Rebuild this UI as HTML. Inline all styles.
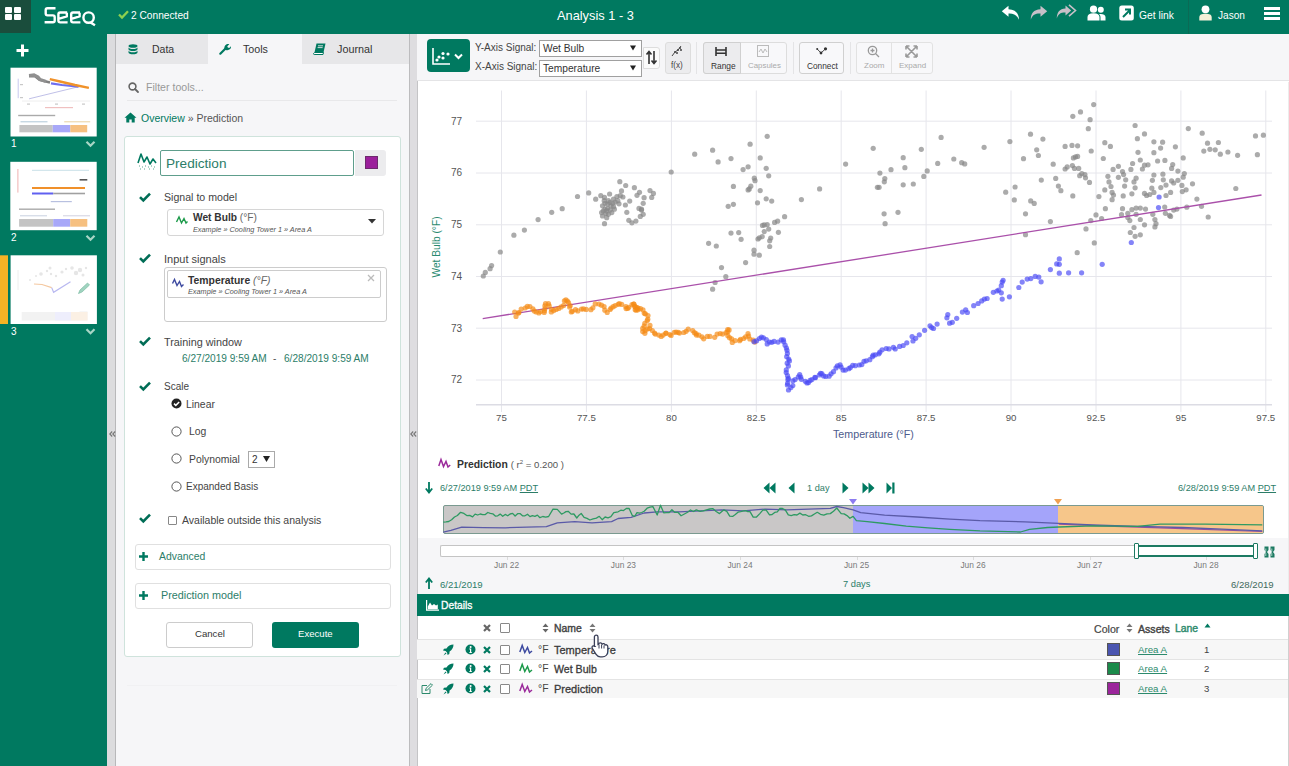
<!DOCTYPE html>
<html><head><meta charset="utf-8">
<style>
*{margin:0;padding:0;box-sizing:border-box}
html,body{width:1289px;height:766px;overflow:hidden;background:#fff;font-family:"Liberation Sans",sans-serif;color:#333}
.a{position:absolute}
.t{position:absolute;white-space:nowrap;line-height:1}
.teal{color:#007960}
svg{position:absolute;overflow:visible}
</style></head><body>
<!-- HEADER -->
<div class="a" style="left:0;top:0;width:1289px;height:34px;background:#007960"></div>
<div class="a" style="left:0;top:0;width:31px;height:33px;background:#1a4d3c"></div>
<div class="a" style="left:5px;top:7px;width:7px;height:6px;background:#fff;border-radius:1px"></div>
<div class="a" style="left:14px;top:7px;width:7px;height:6px;background:#fff;border-radius:1px"></div>
<div class="a" style="left:5px;top:14px;width:7px;height:6px;background:#fff;border-radius:1px"></div>
<div class="a" style="left:14px;top:14px;width:7px;height:6px;background:#fff;border-radius:1px"></div>
<svg style="left:0;top:0" width="100" height="30" viewBox="0 0 100 30"><g stroke="#fff" stroke-width="2.4" fill="none" stroke-linejoin="round">
<path d="M55.5 8.3 H47.5 Q45.7 8.3 45.7 10.1 V13.6 Q45.7 15.4 47.5 15.4 H52.9 Q54.7 15.4 54.7 17.2 V20.4 Q54.7 22.2 52.9 22.2 H44.6"/>
<path d="M67.2 12.5 H60.2 Q58.4 12.5 58.4 14.3 V20.6 Q58.4 22.4 60.2 22.4 H67.6 M58.6 18.8 L66.8 16.4 V12.8"/>
<path d="M80 12.5 H73 Q71.2 12.5 71.2 14.3 V20.6 Q71.2 22.4 73 22.4 H80.4 M71.4 18.8 L79.6 16.4 V12.8"/>
<circle cx="88.6" cy="17.6" r="5.2"/><path d="M90.5 22.5 L95 25.3"/>
</g></svg>
<svg style="left:118px;top:10px" width="11" height="9" viewBox="0 0 11 9"><path d="M1 4.5L4 7.5L10 1.2" stroke="#8fd14f" stroke-width="2.3" fill="none"/></svg><div class="t" style="left:131px;top:11px;font-size:10.2px;color:#fff">2 Connected</div>
<div class="t" style="left:557px;top:10px;font-size:12.8px;color:#fff">Analysis 1 - 3</div>

<svg style="left:1001px;top:5px" width="20" height="16" viewBox="0 0 20 16"><path d="M7.5 0.8 L0.8 6.3 L7.5 11.8 V8.5 C12 8.3 15.5 9.2 18 14.8 C18 8.5 14.5 4.5 7.5 4.2z" fill="#fff"/></svg>
<svg style="left:1030px;top:5px" width="18" height="16" viewBox="0 0 18 16"><path d="M10.5 0.8 L17.2 6.3 L10.5 11.8 V8.5 C6 8.3 2.5 9.2 0.8 14.8 C0.8 8.5 3.5 4.5 10.5 4.2z" fill="#c8c0c8"/></svg>
<svg style="left:1056px;top:4px" width="20" height="17" viewBox="0 0 20 17"><path d="M9.5 1.5 L15.2 6.5 L9.5 11.5 V8.5 C5.5 8.3 2.5 9.2 0.8 14.5 C0.8 8.5 3.5 4.8 9.5 4.5z" fill="#c8c0c8"/><path d="M13 0.8 L19.5 6.5 L13 12.2" stroke="#c8c0c8" stroke-width="1.6" fill="none"/></svg>
<svg style="left:1087px;top:5px" width="19" height="16" viewBox="0 0 19 16"><circle cx="6.5" cy="4.2" r="3.6" fill="#fff"/><path d="M0.5 15.5 V12 C0.5 9.5 2.5 8.2 6.5 8.2 C10.5 8.2 12.5 9.5 12.5 12 V15.5z" fill="#fff"/><circle cx="13.8" cy="4.8" r="3" fill="#fff"/><path d="M13.5 15.5 V12.5 C13.5 11 13 10 12 9 C15.5 8.5 18.5 9.5 18.5 12 V15.5z" fill="#fff"/></svg>
<svg style="left:1119px;top:5px" width="15" height="16" viewBox="0 0 15 16"><rect x="0.3" y="0.5" width="14.5" height="15" rx="2.5" fill="#fff"/><path d="M4 12 L10.5 5.5 M6 4.5 H11 V9.5" stroke="#007960" stroke-width="2" fill="none"/></svg>
<svg style="left:1199px;top:5px" width="13" height="16" viewBox="0 0 13 16"><circle cx="6.5" cy="4.3" r="3.9" fill="#fff"/><path d="M0.3 15.5 V12.5 C0.3 9.8 2.5 8.8 6.5 8.8 C10.5 8.8 12.7 9.8 12.7 12.5 V15.5z" fill="#f4f0d8"/></svg>
<div class="t" style="left:1139px;top:11px;font-size:10.3px;color:#fff">Get link</div>
<div class="a" style="left:1188px;top:0;width:1px;height:34px;background:#0b6a55"></div>
<div class="t" style="left:1218px;top:11px;font-size:10.1px;color:#fff">Jason</div>
<div class="a" style="left:1264px;top:7px;width:16px;height:3px;background:#fff"></div>
<div class="a" style="left:1264px;top:12px;width:16px;height:3px;background:#fff"></div>
<div class="a" style="left:1264px;top:17px;width:16px;height:3px;background:#fff"></div>

<!-- LEFT SIDEBAR -->
<div class="a" style="left:0;top:34px;width:107px;height:732px;background:#007960"></div>
<svg style="left:16px;top:44px" width="13" height="13" viewBox="0 0 13 13"><path d="M6.5 0.5v12M0.5 6.5h12" stroke="#fff" stroke-width="3"/></svg>
<svg style="left:0;top:0;filter:blur(0.35px)" width="107" height="766" viewBox="0 0 107 766">
 <rect x="10.5" y="67.7" width="86.2" height="68.8" fill="#fff"/>
 <line x1="18.2" y1="78.7" x2="18.2" y2="98.2" stroke="#c8c8f0" stroke-width="1"/>
 <line x1="22" y1="101" x2="90" y2="101" stroke="#eee" stroke-width="1"/>
 <line x1="29.1" y1="98.8" x2="78.6" y2="86.7" stroke="#c0c0e8" stroke-width="1"/>
 <path d="M29 76.4 L35 76.2 L39.5 79.8 L50 82.5" stroke="#808080" stroke-width="2.4" fill="none"/>
 <path d="M51 83.3 L62 85 L78.6 86.7" stroke="#6e6ef0" stroke-width="2.2" fill="none"/>
 <path d="M49.8 79.2 L60 81.5 L75 85 L88.9 87.9" stroke="#f0922a" stroke-width="2.4" fill="none"/>

 <g fill="#c8c8c8"><rect x="20" y="84" width="3" height="1.2"/><rect x="20" y="97" width="3" height="1.2"/><rect x="27" y="103.5" width="3" height="1.2"/><rect x="55" y="103.5" width="3" height="1.2"/><rect x="82" y="103.5" width="3" height="1.2"/></g>
 <g fill="#c8c8c8"><rect x="26" y="172" width="3" height="1.2"/><rect x="23" y="189.5" width="2" height="1.2"/><rect x="33" y="197" width="3" height="1.2"/><rect x="56" y="197" width="3" height="1.2"/><rect x="80" y="197" width="3" height="1.2"/></g>
 <path d="M29 75.5 L34 75 L38 77 L40 79.5 L46 81.5" stroke="#909090" stroke-width="3.2" fill="none"/>
 <rect x="45" y="107" width="28" height="1.2" fill="#f0c0c0"/>
 <rect x="18.2" y="114.8" width="37" height="1.4" fill="#aaa"/>
 <rect x="20.5" y="121.3" width="27" height="1" fill="#b0c8d8"/>
 <rect x="64.2" y="121.3" width="26" height="1" fill="#e8d0a0"/>
 <rect x="19.4" y="125" width="33.3" height="7.3" fill="#c4c4c4"/>
 <rect x="52.7" y="125" width="17.6" height="7.3" fill="#a8a8f8"/>
 <rect x="70.3" y="125" width="16.9" height="7.3" fill="#f6c080"/>

 <rect x="10.3" y="161.8" width="86.4" height="68.4" fill="#fff"/>
 <line x1="32" y1="170.3" x2="89" y2="170.3" stroke="#c8e0e8" stroke-width="1"/>
 <line x1="17.9" y1="169" x2="17.9" y2="192.6" stroke="#f0b0b0" stroke-width="1"/>
 <line x1="32" y1="187.9" x2="85" y2="187.9" stroke="#f0902a" stroke-width="2"/>
 <line x1="32" y1="193.5" x2="53.2" y2="193.5" stroke="#6060f0" stroke-width="2"/>
 <line x1="53.2" y1="193.5" x2="85" y2="193.5" stroke="#a0a0a0" stroke-width="1.6"/>
 <rect x="79.6" y="179" width="7.7" height="1.6" fill="#555"/>
 <rect x="50.8" y="201" width="21" height="1.2" fill="#b8c0e0"/>
 <rect x="19" y="208.5" width="36" height="1.4" fill="#aaa"/>
 <rect x="20" y="215.3" width="27" height="1" fill="#c8d0e0"/>
 <rect x="63" y="215.3" width="27" height="1" fill="#d0d0e0"/>
 <rect x="19.1" y="219" width="34.1" height="7.7" fill="#c4c4c4"/>
 <rect x="53.2" y="219" width="17" height="7.7" fill="#a8a8f8"/>
 <rect x="70.2" y="219" width="17.1" height="7.7" fill="#f6c080"/>

 <rect x="0" y="255.3" width="8" height="68.7" fill="#f6b325"/>
 <rect x="10.6" y="255.3" width="86.3" height="68.7" fill="#fff"/>
 <line x1="18" y1="270" x2="18" y2="290" stroke="#eee" stroke-width="1"/>
 <g fill="#e6e6e6"><circle cx="41" cy="274" r="1.8"/><circle cx="47" cy="271" r="1.2"/><circle cx="50" cy="268" r="1.5"/><circle cx="51" cy="274" r="1.2"/><circle cx="62" cy="272" r="1.6"/><circle cx="66" cy="269" r="1.2"/><circle cx="72" cy="268" r="1.8"/><circle cx="76" cy="273" r="2.2"/><circle cx="80" cy="270" r="2.2"/><circle cx="83" cy="275" r="1.5"/><circle cx="56" cy="276" r="1.2"/><circle cx="30" cy="280" r="1"/><circle cx="36" cy="276" r="1"/><circle cx="86" cy="268" r="1.2"/></g>
 <path d="M34 284 L42 284.5 L51.7 287.6" stroke="#f4c8a0" stroke-width="1.2" fill="none"/>
 <path d="M51.7 287.6 L53.6 292.3 L70.5 281.7" stroke="#b8b8f0" stroke-width="1.2" fill="none"/>
 <path d="M80 290 L87.5 283 L89.5 285 L82 292 L78.5 293.5z" fill="#a0d4c0" stroke="#7cbca4" stroke-width=".7"/>
 <path d="M79.5 312 h8" stroke="#eee"/>
 <rect x="21.7" y="312" width="65.8" height="8.5" fill="#f2f2f2"/>
 <rect x="55" y="312" width="16" height="8.5" fill="#eeeefc"/>
 <rect x="71" y="312" width="16.5" height="8.5" fill="#fbf0e4"/>
 <path d="M86.5 141.8 L90.5 145.8 L94.5 141.8" stroke="#a8d6c6" stroke-width="2.2" fill="none"/>
 <path d="M86.5 235.8 L90.5 239.8 L94.5 235.8" stroke="#a8d6c6" stroke-width="2.2" fill="none"/>
 <path d="M86.5 329.3 L90.5 333.3 L94.5 329.3" stroke="#a8d6c6" stroke-width="2.2" fill="none"/>
</svg>
<div class="t" style="left:11px;top:139px;font-size:10px;color:#fff">1</div>
<div class="t" style="left:11px;top:233px;font-size:10px;color:#fff">2</div>
<div class="t" style="left:11px;top:327px;font-size:10px;color:#fff">3</div>

<!-- GRAY STRIP -->
<div class="a" style="left:107px;top:34px;width:9px;height:732px;background:#dcdcde;border-right:1px solid #b8b8ba"></div>

<svg style="left:109px;top:431px" width="7" height="6" viewBox="0 0 7 6"><path d="M3.2 0.5L0.8 3L3.2 5.5M6.2 0.5L3.8 3L6.2 5.5" stroke="#777" stroke-width="1.1" fill="none"/></svg>
<!-- LEFT PANEL -->
<div class="a" style="left:116px;top:34px;width:293px;height:732px;background:#f6f6f8"></div>
<div class="a" style="left:116px;top:34px;width:92px;height:30px;background:#e7e7e9"></div>
<div class="a" style="left:302px;top:34px;width:107px;height:30px;background:#e7e7e9"></div>
<div class="t" style="left:152px;top:44px;font-size:10.5px;color:#333">Data</div>
<div class="t" style="left:243px;top:44px;font-size:10.7px;color:#333">Tools</div>
<div class="t" style="left:337px;top:44px;font-size:10.8px;color:#333">Journal</div>
<div class="t" style="left:146px;top:82px;font-size:10.6px;color:#999">Filter tools...</div>
<div class="a" style="left:127px;top:100px;width:270px;height:1px;background:#e8e8ea"></div>
<div class="t" style="left:141px;top:113px;font-size:10.5px"><span class="teal">Overview</span> <span style="color:#555">» Prediction</span></div>

<!-- CARD -->
<div class="a" style="left:124px;top:136px;width:277px;height:521px;background:#fff;border:1px solid #cfe3dc;border-radius:3px"></div>

<!-- tab icons -->
<svg style="left:128px;top:44px" width="10" height="12" viewBox="0 0 10 12"><ellipse cx="5" cy="2" rx="4.5" ry="1.8" fill="#007960"/><path d="M0.5 3.2v2c0 1 2 1.8 4.5 1.8s4.5-.8 4.5-1.8v-2c0 1-2 1.8-4.5 1.8S.5 4.2.5 3.2z" fill="#007960"/><path d="M0.5 6.4v2c0 1 2 1.8 4.5 1.8s4.5-.8 4.5-1.8v-2c0 1-2 1.8-4.5 1.8S.5 7.4.5 6.4z" fill="#007960"/></svg>
<svg style="left:219px;top:43px" width="12" height="12" viewBox="0 0 12 12"><path d="M1.3 10.7L6.3 5.7" stroke="#007960" stroke-width="2.2" stroke-linecap="round"/><path d="M5.6 6.4C4.9 4.6 5.6 2.2 7.6 1.3C8.5.9 9.5.9 10.3 1.2L8.3 3.2 8.8 4.6 10.2 5.1 12 3.2C12.1 4.2 11.9 5.3 11.1 6.1 9.9 7.2 8.2 7.4 6.8 6.9z" fill="#007960"/></svg>
<svg style="left:313px;top:43px" width="13" height="12" viewBox="0 0 13 12"><path d="M3.5 0.5H12.5L10.5 9.5H1.5z" fill="#007960"/><path d="M1.5 9.5H10.5L10 11.5H1.2C.6 11.5.4 11 .6 10.5z" fill="#fff" stroke="#007960" stroke-width="1"/><path d="M5 2.8H10M4.6 4.6H9.6" stroke="#e7e7e9" stroke-width=".9"/></svg>
<!-- search icon -->
<svg style="left:128px;top:82px" width="11" height="11" viewBox="0 0 11 11"><circle cx="4.5" cy="4.5" r="3.4" stroke="#666" stroke-width="1.6" fill="none"/><path d="M7 7l3 3" stroke="#666" stroke-width="1.8" stroke-linecap="round"/></svg>
<!-- home icon -->
<svg style="left:124px;top:112px" width="13" height="11" viewBox="0 0 13 11"><path d="M6.5 0.5L0.5 5.8h1.8V10.5h3V7.5h2.4v3h3V5.8h1.8z" fill="#007960"/></svg>

<!-- CARD CONTENT -->
<svg style="left:137px;top:152px" width="20" height="20" viewBox="0 0 20 20"><path d="M1 11 L4 2 L7 10 L10 5 L13 12 L16 7 L19 11" stroke="#007960" stroke-width="1.6" fill="none" stroke-linejoin="round"/><path d="M2 14h1M5 15h1M8 14h1M11 15h1M14 14h1M17 15h1M3 17h1M7 17h1M12 17h1M16 17h1" stroke="#5aa890" stroke-width="1.2"/></svg>
<div class="a" style="left:160px;top:150px;width:194px;height:26px;border:1.5px solid #5e9e8c;border-radius:2px;background:#fff"></div>
<div class="t" style="left:166px;top:157px;font-size:13.6px;color:#2c7d68">Prediction</div>
<div class="a" style="left:355px;top:150px;width:31px;height:26px;background:#ececee;border-radius:0 3px 3px 0"></div>
<div class="a" style="left:365px;top:156px;width:13px;height:13px;background:#9b1f9b;border:1px solid #6d2a6d"></div>

<svg class="chk" style="left:139px;top:192px" width="12" height="10" viewBox="0 0 12 10"><path d="M1 5.2L4.3 8.5L11 1.6" stroke="#006d56" stroke-width="2.6" fill="none"/></svg>
<div class="t" style="left:164px;top:192px;font-size:10.6px;color:#444">Signal to model</div>
<div class="a" style="left:167px;top:209px;width:217px;height:27px;border:1px solid #d6d6d6;border-radius:3px;background:#fff"></div>
<svg style="left:176px;top:215px" width="12" height="10" viewBox="0 0 12 10"><path d="M0.5 7 L3 2 L5.5 8 L8 3.5 L10 8 L11.5 6.5" stroke="#1c9a4a" stroke-width="1.4" fill="none"/></svg>
<div class="t" style="left:193px;top:213px;font-size:10.2px;color:#333"><b>Wet Bulb</b> <span style="color:#666">(°F)</span></div>
<div class="t" style="left:193px;top:226px;font-size:7.3px;color:#555;font-style:italic">Example » Cooling Tower 1 » Area A</div>
<svg style="left:368px;top:219px" width="8" height="5" viewBox="0 0 8 5"><path d="M0 0h8L4 4.5z" fill="#333"/></svg>

<svg style="left:139px;top:253px" width="12" height="10" viewBox="0 0 12 10"><path d="M1 5.2L4.3 8.5L11 1.6" stroke="#006d56" stroke-width="2.6" fill="none"/></svg>
<div class="t" style="left:164px;top:254px;font-size:11px;color:#444">Input signals</div>
<div class="a" style="left:164px;top:267px;width:223px;height:55px;border:1px solid #ccc;border-radius:3px;background:#fff"></div>
<div class="a" style="left:167px;top:270px;width:214px;height:28px;border:1px solid #ccc;border-radius:2px;background:#fff"></div>
<svg style="left:172px;top:278px" width="12" height="10" viewBox="0 0 12 10"><path d="M0.5 5.5 L2.5 1.5 L5 7.5 L7.5 3.5 L9.5 8.5 L11.5 6.5" stroke="#3d4aa0" stroke-width="1.4" fill="none"/></svg>
<div class="t" style="left:188px;top:276px;font-size:10.4px;color:#333"><b>Temperature</b> <i style="color:#666">(°F)</i></div>
<div class="t" style="left:188px;top:288px;font-size:7.3px;color:#555;font-style:italic">Example » Cooling Tower 1 » Area A</div>
<svg style="left:367px;top:274px" width="8" height="8" viewBox="0 0 8 8"><path d="M1 1L7 7M7 1L1 7" stroke="#bbb" stroke-width="1.3"/></svg>

<svg style="left:139px;top:336px" width="12" height="10" viewBox="0 0 12 10"><path d="M1 5.2L4.3 8.5L11 1.6" stroke="#006d56" stroke-width="2.6" fill="none"/></svg>
<div class="t" style="left:164px;top:337px;font-size:10.85px;color:#444">Training window</div>
<div class="t" style="left:182px;top:354px;font-size:10.1px;color:#2c7d68">6/27/2019 9:59 AM</div>
<div class="t" style="left:273px;top:354px;font-size:10.1px;color:#555">-</div>
<div class="t" style="left:284px;top:354px;font-size:10.1px;color:#2c7d68">6/28/2019 9:59 AM</div>

<svg style="left:139px;top:381px" width="12" height="10" viewBox="0 0 12 10"><path d="M1 5.2L4.3 8.5L11 1.6" stroke="#006d56" stroke-width="2.6" fill="none"/></svg>
<div class="t" style="left:164px;top:382px;font-size:10px;color:#444">Scale</div>
<svg style="left:171px;top:398px" width="11" height="11" viewBox="0 0 11 11"><circle cx="5.5" cy="5.5" r="5" fill="#222"/><path d="M3 5.6l1.8 1.8L8.2 4" stroke="#fff" stroke-width="1.5" fill="none"/></svg>
<div class="t" style="left:186px;top:400px;font-size:10.4px;color:#444">Linear</div>
<svg style="left:171px;top:426px" width="11" height="11" viewBox="0 0 11 11"><circle cx="5.5" cy="5.5" r="4.6" fill="#fff" stroke="#444" stroke-width=".9"/></svg>
<div class="t" style="left:189px;top:427px;font-size:10.4px;color:#444">Log</div>
<svg style="left:171px;top:453px" width="11" height="11" viewBox="0 0 11 11"><circle cx="5.5" cy="5.5" r="4.6" fill="#fff" stroke="#444" stroke-width=".9"/></svg>
<div class="t" style="left:189px;top:455px;font-size:10.4px;color:#444">Polynomial</div>
<div class="a" style="left:248px;top:451px;width:27px;height:17px;border:1px solid #aaa;background:#fff"></div>
<div class="t" style="left:252px;top:455px;font-size:10px;color:#333">2</div>
<svg style="left:263px;top:456px" width="7" height="6" viewBox="0 0 7 6"><path d="M0 0h7L3.5 6z" fill="#222"/></svg>
<svg style="left:171px;top:481px" width="11" height="11" viewBox="0 0 11 11"><circle cx="5.5" cy="5.5" r="4.6" fill="#fff" stroke="#444" stroke-width=".9"/></svg>
<div class="t" style="left:186px;top:482px;font-size:10px;color:#444">Expanded Basis</div>

<svg style="left:139px;top:513px" width="12" height="10" viewBox="0 0 12 10"><path d="M1 5.2L4.3 8.5L11 1.6" stroke="#006d56" stroke-width="2.6" fill="none"/></svg>
<div class="a" style="left:168px;top:516px;width:9px;height:9px;border:1px solid #888;border-radius:1px;background:#fff"></div>
<div class="t" style="left:182px;top:515px;font-size:10.5px;color:#444">Available outside this analysis</div>

<div class="a" style="left:135px;top:544px;width:256px;height:26px;border:1px solid #e0e0e0;border-radius:3px;background:#fff"></div>
<svg style="left:139px;top:552px" width="9" height="9" viewBox="0 0 9 9"><path d="M4.5 0v9M0 4.5h9" stroke="#007960" stroke-width="2.4"/></svg>
<div class="t" style="left:159px;top:552px;font-size:10.4px;color:#2c7d68">Advanced</div>
<div class="a" style="left:135px;top:583px;width:256px;height:26px;border:1px solid #e0e0e0;border-radius:3px;background:#fff"></div>
<svg style="left:139px;top:591px" width="9" height="9" viewBox="0 0 9 9"><path d="M4.5 0v9M0 4.5h9" stroke="#007960" stroke-width="2.4"/></svg>
<div class="t" style="left:161px;top:590px;font-size:10.8px;color:#2c7d68">Prediction model</div>

<div class="a" style="left:166px;top:622px;width:87px;height:26px;border:1px solid #ccc;border-radius:3px;background:#fff"></div>
<div class="t" style="left:195px;top:629px;font-size:9.6px;color:#333">Cancel</div>
<div class="a" style="left:272px;top:622px;width:87px;height:26px;border-radius:3px;background:#007960"></div>
<div class="t" style="left:298px;top:629px;font-size:9.6px;color:#fff">Execute</div>
<div class="a" style="left:127px;top:685px;width:270px;height:1px;background:#f1f1f3"></div>

<!-- SEPARATOR -->
<div class="a" style="left:409px;top:34px;width:9px;height:732px;background:#dedde0;border-left:1px solid #bcbcbe;border-right:1px solid #c4c4c6"></div>
<svg style="left:410px;top:431px" width="7" height="6" viewBox="0 0 7 6"><path d="M3.2 0.5L0.8 3L3.2 5.5M6.2 0.5L3.8 3L6.2 5.5" stroke="#777" stroke-width="1.1" fill="none"/></svg>

<!-- TOOLBAR -->
<div class="a" style="left:417px;top:34px;width:872px;height:47px;background:#f6f6f8;border-bottom:1px solid #e4e4e6"></div>
<div class="a" style="left:427px;top:39px;width:43px;height:33px;background:#007960;border-radius:4px"></div>
<svg style="left:431px;top:45px" width="36" height="22" viewBox="0 0 36 22"><path d="M2 3v16h17" stroke="#fff" stroke-width="1.6" fill="none"/><circle cx="6" cy="15" r="1.6" fill="#fff"/><circle cx="8" cy="12" r="1.6" fill="#fff"/><circle cx="12" cy="13" r="1.6" fill="#fff"/><circle cx="12" cy="8.5" r="1.6" fill="#fff"/><circle cx="17" cy="9" r="1.6" fill="#fff"/><path d="M24 9.5l3.5 3.5 3.5-3.5" stroke="#fff" stroke-width="2" fill="none"/></svg>
<div class="t" style="left:475px;top:43px;font-size:10px;color:#444">Y-Axis Signal:</div>
<div class="t" style="left:475px;top:62px;font-size:10px;color:#444">X-Axis Signal:</div>
<div class="a" style="left:539px;top:40px;width:103px;height:17px;border:1px solid #a0a0a0;background:#fff"></div>
<div class="t" style="left:543px;top:44px;font-size:10.2px;color:#333">Wet Bulb</div>
<svg style="left:630px;top:45px" width="6" height="6" viewBox="0 0 6 6"><path d="M0 0.5h6L3 5.5z" fill="#222"/></svg>
<div class="a" style="left:539px;top:60px;width:103px;height:17px;border:1px solid #a0a0a0;background:#fff"></div>
<div class="t" style="left:543px;top:64px;font-size:10.2px;color:#333">Temperature</div>
<svg style="left:630px;top:65px" width="6" height="6" viewBox="0 0 6 6"><path d="M0 0.5h6L3 5.5z" fill="#222"/></svg>
<div class="a" style="left:643px;top:47px;width:17px;height:22px;border:1px solid #ddd;border-radius:0 3px 3px 0;background:#fbfbfb"></div>
<svg style="left:646px;top:50px" width="11" height="15" viewBox="0 0 11 15"><path d="M3 14V2M0.5 4.5L3 1.5L5.5 4.5M8 1v12M5.5 10.5L8 13.5L10.5 10.5" stroke="#333" stroke-width="1.6" fill="none"/></svg>
<div class="a" style="left:665px;top:42px;width:26px;height:32px;border:1px solid #ddd;border-radius:3px;background:#ececee"></div>
<svg style="left:671px;top:45px" width="12" height="12" viewBox="0 0 12 12"><path d="M1 11L4 7L7 5L10 1" stroke="#444" stroke-width="1" fill="none"/><circle cx="4" cy="7" r="1" fill="#444"/><circle cx="7" cy="5" r="1" fill="#444"/><circle cx="9" cy="3" r="1" fill="#444"/><circle cx="10" cy="5" r="1" fill="#444"/><circle cx="6" cy="8" r="1" fill="#444"/></svg>
<div class="t" style="left:671px;top:62px;font-size:8.2px;color:#444">f(x)</div>
<div class="a" style="left:696px;top:42px;width:1px;height:32px;background:#e4e4e6"></div>
<div class="a" style="left:703px;top:42px;width:84px;height:32px;border:1px solid #ddd;border-radius:3px;background:#f8f8fa"></div>
<div class="a" style="left:703px;top:42px;width:38px;height:32px;border:1px solid #d0d0d0;border-radius:3px 0 0 3px;background:#ececee"></div>
<svg style="left:715px;top:47px" width="12" height="9" viewBox="0 0 12 9"><path d="M1 0v9M11 0v9M1 3h10M1 6.3h10" stroke="#333" stroke-width="1.6"/></svg>
<div class="t" style="left:711px;top:62px;font-size:8.4px;color:#333">Range</div>
<svg style="left:757px;top:45px" width="12" height="12" viewBox="0 0 12 12"><rect x=".5" y=".5" width="11" height="11" fill="none" stroke="#bbb"/><path d="M2 7l2-3 2 4 2-4 2 3" stroke="#bbb" fill="none"/></svg>
<div class="t" style="left:748px;top:62px;font-size:7.9px;color:#aaa">Capsules</div>
<div class="a" style="left:793px;top:42px;width:1px;height:32px;background:#e4e4e6"></div>
<div class="a" style="left:799px;top:42px;width:45px;height:32px;border:1px solid #d0d0d0;border-radius:3px;background:#f8f8fa"></div>
<svg style="left:816px;top:47px" width="11" height="8" viewBox="0 0 11 8"><path d="M1.2 2L5 6L9.5 1.8" stroke="#333" stroke-width=".9" fill="none"/><circle cx="1.2" cy="2" r="1" fill="#333"/><circle cx="5" cy="6" r="1.4" fill="#333"/><circle cx="9.5" cy="1.8" r="1.6" fill="#333"/></svg>
<div class="t" style="left:807px;top:62px;font-size:8.3px;color:#333">Connect</div>
<div class="a" style="left:850px;top:42px;width:1px;height:32px;background:#e4e4e6"></div>
<div class="a" style="left:856px;top:42px;width:77px;height:32px;border:1px solid #e2e2e2;border-radius:3px;background:#f8f8fa"></div>
<div class="a" style="left:891px;top:42px;width:1px;height:32px;background:#e2e2e2"></div>
<svg style="left:867px;top:45px" width="13" height="13" viewBox="0 0 13 13"><circle cx="5.5" cy="5.5" r="4.2" fill="none" stroke="#999" stroke-width="1.3"/><path d="M8.5 8.5l3.5 3.5M3.5 5.5h4M5.5 3.5v4" stroke="#999" stroke-width="1.3"/></svg>
<div class="t" style="left:864px;top:62px;font-size:8px;color:#aaa">Zoom</div>
<svg style="left:905px;top:45px" width="13" height="13" viewBox="0 0 13 13"><path d="M1 1l11 11M12 1L1 12M1 1h3.5M1 1v3.5M12 1h-3.5M12 1v3.5M1 12h3.5M1 12v-3.5M12 12h-3.5M12 12v-3.5" stroke="#999" stroke-width="1.6"/></svg>
<div class="t" style="left:899px;top:62px;font-size:8px;color:#aaa">Expand</div>


<!--CHART--><svg style="left:0;top:0" width="1289" height="766" viewBox="0 0 1289 766"><line x1="501.5" y1="90.5" x2="501.5" y2="412" stroke="#e6e6ec" stroke-width="1"/><line x1="586.4" y1="90.5" x2="586.4" y2="412" stroke="#e6e6ec" stroke-width="1"/><line x1="671.4" y1="90.5" x2="671.4" y2="412" stroke="#e6e6ec" stroke-width="1"/><line x1="756.3" y1="90.5" x2="756.3" y2="412" stroke="#e6e6ec" stroke-width="1"/><line x1="841.2" y1="90.5" x2="841.2" y2="412" stroke="#e6e6ec" stroke-width="1"/><line x1="926.1" y1="90.5" x2="926.1" y2="412" stroke="#e6e6ec" stroke-width="1"/><line x1="1011.0" y1="90.5" x2="1011.0" y2="412" stroke="#e6e6ec" stroke-width="1"/><line x1="1096.0" y1="90.5" x2="1096.0" y2="412" stroke="#e6e6ec" stroke-width="1"/><line x1="1180.9" y1="90.5" x2="1180.9" y2="412" stroke="#e6e6ec" stroke-width="1"/><line x1="1265.8" y1="90.5" x2="1265.8" y2="412" stroke="#e6e6ec" stroke-width="1"/><line x1="476" y1="121.2" x2="1272" y2="121.2" stroke="#e6e6ec" stroke-width="1"/><line x1="476" y1="173.0" x2="1272" y2="173.0" stroke="#e6e6ec" stroke-width="1"/><line x1="476" y1="224.8" x2="1272" y2="224.8" stroke="#e6e6ec" stroke-width="1"/><line x1="476" y1="276.5" x2="1272" y2="276.5" stroke="#e6e6ec" stroke-width="1"/><line x1="476" y1="328.2" x2="1272" y2="328.2" stroke="#e6e6ec" stroke-width="1"/><line x1="476" y1="380.0" x2="1272" y2="380.0" stroke="#e6e6ec" stroke-width="1"/><line x1="476" y1="404.8" x2="1272" y2="404.8" stroke="#dcdce4" stroke-width="1.6"/><g fill="#878787" fill-opacity="0.7"><circle cx="483.3" cy="276.0" r="2.6"/><circle cx="485.3" cy="272.4" r="2.6"/><circle cx="490.1" cy="268.7" r="2.6"/><circle cx="491.6" cy="265.6" r="2.6"/><circle cx="500.3" cy="252.0" r="2.6"/><circle cx="513.9" cy="235.2" r="2.6"/><circle cx="524.4" cy="230.1" r="2.6"/><circle cx="538.1" cy="219.6" r="2.6"/><circle cx="551.7" cy="212.3" r="2.6"/><circle cx="562.2" cy="208.7" r="2.6"/><circle cx="577.5" cy="196.5" r="2.6"/><circle cx="588.7" cy="192.9" r="2.6"/><circle cx="595.7" cy="199.2" r="2.6"/><circle cx="600.8" cy="195.7" r="2.6"/><circle cx="604.5" cy="197.4" r="2.6"/><circle cx="609.6" cy="194.0" r="2.6"/><circle cx="619.8" cy="181.7" r="2.6"/><circle cx="625.7" cy="185.5" r="2.6"/><circle cx="634.4" cy="187.7" r="2.6"/><circle cx="639.5" cy="192.3" r="2.6"/><circle cx="650.0" cy="190.6" r="2.6"/><circle cx="653.4" cy="193.4" r="2.6"/><circle cx="651.7" cy="197.4" r="2.6"/><circle cx="621.5" cy="190.9" r="2.6"/><circle cx="629.7" cy="201.1" r="2.6"/><circle cx="625.4" cy="205.0" r="2.6"/><circle cx="626.8" cy="212.3" r="2.6"/><circle cx="637.0" cy="195.3" r="2.6"/><circle cx="644.1" cy="197.7" r="2.6"/><circle cx="643.2" cy="203.3" r="2.6"/><circle cx="641.5" cy="209.2" r="2.6"/><circle cx="643.2" cy="214.3" r="2.6"/><circle cx="640.3" cy="216.4" r="2.6"/><circle cx="628.8" cy="220.3" r="2.6"/><circle cx="631.9" cy="222.8" r="2.6"/><circle cx="635.9" cy="221.1" r="2.6"/><circle cx="604.5" cy="223.7" r="2.6"/><circle cx="606.7" cy="217.7" r="2.6"/><circle cx="601.6" cy="212.6" r="2.6"/><circle cx="614.4" cy="209.2" r="2.6"/><circle cx="611.8" cy="212.6" r="2.6"/><circle cx="619.0" cy="203.8" r="2.6"/><circle cx="613.5" cy="199.0" r="2.6"/><circle cx="616.9" cy="196.5" r="2.6"/><circle cx="622.9" cy="197.0" r="2.6"/><circle cx="602.5" cy="205.8" r="2.6"/><circle cx="605.0" cy="203.3" r="2.6"/><circle cx="607.6" cy="204.1" r="2.6"/><circle cx="610.1" cy="202.4" r="2.6"/><circle cx="612.7" cy="203.3" r="2.6"/><circle cx="615.2" cy="202.1" r="2.6"/><circle cx="605.0" cy="209.2" r="2.6"/><circle cx="607.6" cy="208.4" r="2.6"/><circle cx="610.1" cy="210.1" r="2.6"/><circle cx="603.3" cy="210.9" r="2.6"/><circle cx="605.9" cy="213.5" r="2.6"/><circle cx="608.4" cy="214.3" r="2.6"/><circle cx="602.5" cy="216.0" r="2.6"/><circle cx="606.7" cy="210.9" r="2.6"/><circle cx="611.0" cy="205.8" r="2.6"/><circle cx="613.5" cy="206.7" r="2.6"/><circle cx="617.8" cy="200.7" r="2.6"/><circle cx="620.3" cy="195.7" r="2.6"/><circle cx="608.4" cy="200.7" r="2.6"/><circle cx="604.2" cy="200.7" r="2.6"/><circle cx="641.5" cy="210.1" r="2.6"/><circle cx="639.0" cy="208.4" r="2.6"/><circle cx="671.2" cy="172.0" r="2.6"/><circle cx="694.7" cy="154.2" r="2.6"/><circle cx="712.6" cy="150.2" r="2.6"/><circle cx="718.1" cy="161.9" r="2.6"/><circle cx="731.0" cy="158.6" r="2.6"/><circle cx="750.1" cy="144.2" r="2.6"/><circle cx="767.2" cy="136.3" r="2.6"/><circle cx="760.2" cy="157.9" r="2.6"/><circle cx="748.1" cy="166.8" r="2.6"/><circle cx="743.1" cy="169.6" r="2.6"/><circle cx="766.2" cy="168.3" r="2.6"/><circle cx="768.7" cy="175.8" r="2.6"/><circle cx="754.3" cy="178.2" r="2.6"/><circle cx="755.0" cy="180.7" r="2.6"/><circle cx="733.4" cy="186.4" r="2.6"/><circle cx="750.8" cy="186.2" r="2.6"/><circle cx="748.1" cy="189.9" r="2.6"/><circle cx="749.3" cy="188.9" r="2.6"/><circle cx="760.2" cy="190.6" r="2.6"/><circle cx="766.2" cy="198.8" r="2.6"/><circle cx="771.7" cy="201.1" r="2.6"/><circle cx="757.5" cy="202.8" r="2.6"/><circle cx="733.4" cy="204.3" r="2.6"/><circle cx="728.2" cy="206.3" r="2.6"/><circle cx="801.4" cy="199.6" r="2.6"/><circle cx="819.6" cy="188.9" r="2.6"/><circle cx="845.6" cy="164.1" r="2.6"/><circle cx="784.6" cy="216.7" r="2.6"/><circle cx="777.6" cy="221.2" r="2.6"/><circle cx="774.6" cy="222.4" r="2.6"/><circle cx="767.2" cy="224.6" r="2.6"/><circle cx="762.5" cy="225.4" r="2.6"/><circle cx="764.2" cy="224.9" r="2.6"/><circle cx="768.7" cy="229.1" r="2.6"/><circle cx="764.2" cy="231.6" r="2.6"/><circle cx="778.4" cy="232.3" r="2.6"/><circle cx="731.0" cy="233.1" r="2.6"/><circle cx="738.7" cy="232.6" r="2.6"/><circle cx="741.1" cy="239.3" r="2.6"/><circle cx="758.0" cy="239.0" r="2.6"/><circle cx="759.3" cy="237.8" r="2.6"/><circle cx="762.2" cy="236.6" r="2.6"/><circle cx="770.7" cy="238.0" r="2.6"/><circle cx="769.7" cy="240.8" r="2.6"/><circle cx="769.7" cy="246.5" r="2.6"/><circle cx="708.6" cy="243.3" r="2.6"/><circle cx="716.3" cy="246.0" r="2.6"/><circle cx="754.0" cy="250.2" r="2.6"/><circle cx="754.0" cy="254.2" r="2.6"/><circle cx="759.3" cy="255.2" r="2.6"/><circle cx="745.6" cy="262.6" r="2.6"/><circle cx="721.5" cy="267.6" r="2.6"/><circle cx="725.8" cy="276.7" r="2.6"/><circle cx="715.1" cy="282.5" r="2.6"/><circle cx="712.6" cy="289.2" r="2.6"/><circle cx="873.2" cy="148.3" r="2.6"/><circle cx="879.9" cy="173.1" r="2.6"/><circle cx="884.8" cy="178.6" r="2.6"/><circle cx="884.3" cy="181.8" r="2.6"/><circle cx="877.4" cy="187.3" r="2.6"/><circle cx="879.1" cy="187.3" r="2.6"/><circle cx="891.0" cy="169.7" r="2.6"/><circle cx="903.2" cy="157.7" r="2.6"/><circle cx="904.9" cy="167.7" r="2.6"/><circle cx="903.2" cy="184.8" r="2.6"/><circle cx="913.3" cy="184.0" r="2.6"/><circle cx="921.3" cy="149.3" r="2.6"/><circle cx="923.8" cy="176.4" r="2.6"/><circle cx="927.2" cy="170.9" r="2.6"/><circle cx="937.7" cy="163.4" r="2.6"/><circle cx="941.1" cy="137.4" r="2.6"/><circle cx="953.8" cy="159.0" r="2.6"/><circle cx="961.7" cy="162.7" r="2.6"/><circle cx="964.7" cy="163.9" r="2.6"/><circle cx="984.1" cy="147.3" r="2.6"/><circle cx="1009.9" cy="141.6" r="2.6"/><circle cx="1005.7" cy="192.2" r="2.6"/><circle cx="1015.1" cy="187.0" r="2.6"/><circle cx="1014.3" cy="199.9" r="2.6"/><circle cx="1023.5" cy="158.7" r="2.6"/><circle cx="1030.5" cy="134.2" r="2.6"/><circle cx="1036.7" cy="149.8" r="2.6"/><circle cx="1038.4" cy="155.5" r="2.6"/><circle cx="1030.7" cy="200.9" r="2.6"/><circle cx="1034.2" cy="203.4" r="2.6"/><circle cx="1025.5" cy="213.8" r="2.6"/><circle cx="1025.5" cy="234.7" r="2.6"/><circle cx="884.1" cy="213.8" r="2.6"/><circle cx="898.0" cy="212.3" r="2.6"/><circle cx="885.1" cy="223.7" r="2.6"/><circle cx="1093.7" cy="104.6" r="2.6"/><circle cx="1080.5" cy="111.9" r="2.6"/><circle cx="1072.8" cy="116.3" r="2.6"/><circle cx="1090.1" cy="119.7" r="2.6"/><circle cx="1088.3" cy="128.7" r="2.6"/><circle cx="1042.9" cy="139.1" r="2.6"/><circle cx="1065.1" cy="146.4" r="2.6"/><circle cx="1072.0" cy="145.4" r="2.6"/><circle cx="1077.6" cy="145.8" r="2.6"/><circle cx="1091.2" cy="151.0" r="2.6"/><circle cx="1073.4" cy="157.9" r="2.6"/><circle cx="1075.5" cy="156.9" r="2.6"/><circle cx="1077.6" cy="156.4" r="2.6"/><circle cx="1053.2" cy="164.2" r="2.6"/><circle cx="1065.1" cy="169.0" r="2.6"/><circle cx="1067.2" cy="166.9" r="2.6"/><circle cx="1072.4" cy="165.6" r="2.6"/><circle cx="1074.5" cy="168.4" r="2.6"/><circle cx="1078.7" cy="168.4" r="2.6"/><circle cx="1079.7" cy="175.7" r="2.6"/><circle cx="1081.8" cy="173.6" r="2.6"/><circle cx="1084.9" cy="174.6" r="2.6"/><circle cx="1085.5" cy="177.8" r="2.6"/><circle cx="1089.5" cy="182.4" r="2.6"/><circle cx="1055.7" cy="178.4" r="2.6"/><circle cx="1058.4" cy="186.1" r="2.6"/><circle cx="1060.9" cy="190.7" r="2.6"/><circle cx="1072.8" cy="195.9" r="2.6"/><circle cx="1041.3" cy="180.1" r="2.6"/><circle cx="1050.4" cy="221.6" r="2.6"/><circle cx="1086.0" cy="228.9" r="2.6"/><circle cx="1094.3" cy="242.9" r="2.6"/><circle cx="1090.8" cy="220.6" r="2.6"/><circle cx="1096.0" cy="214.9" r="2.6"/><circle cx="1101.6" cy="218.5" r="2.6"/><circle cx="1098.9" cy="196.6" r="2.6"/><circle cx="1105.4" cy="208.7" r="2.6"/><circle cx="1104.8" cy="189.9" r="2.6"/><circle cx="1103.3" cy="158.5" r="2.6"/><circle cx="1104.8" cy="142.7" r="2.6"/><circle cx="1110.4" cy="146.4" r="2.6"/><circle cx="1113.1" cy="169.4" r="2.6"/><circle cx="1118.4" cy="166.3" r="2.6"/><circle cx="1118.4" cy="177.3" r="2.6"/><circle cx="1107.9" cy="176.3" r="2.6"/><circle cx="1109.0" cy="181.9" r="2.6"/><circle cx="1111.0" cy="186.5" r="2.6"/><circle cx="1112.1" cy="192.4" r="2.6"/><circle cx="1113.5" cy="195.1" r="2.6"/><circle cx="1112.1" cy="199.7" r="2.6"/><circle cx="1123.2" cy="195.9" r="2.6"/><circle cx="1122.5" cy="208.7" r="2.6"/><circle cx="1121.5" cy="214.7" r="2.6"/><circle cx="1127.8" cy="213.3" r="2.6"/><circle cx="1131.9" cy="209.7" r="2.6"/><circle cx="1136.1" cy="208.1" r="2.6"/><circle cx="1140.3" cy="208.1" r="2.6"/><circle cx="1145.5" cy="209.1" r="2.6"/><circle cx="1135.1" cy="125.5" r="2.6"/><circle cx="1137.4" cy="138.7" r="2.6"/><circle cx="1144.5" cy="133.9" r="2.6"/><circle cx="1153.9" cy="141.8" r="2.6"/><circle cx="1162.6" cy="142.2" r="2.6"/><circle cx="1160.6" cy="148.1" r="2.6"/><circle cx="1175.4" cy="146.8" r="2.6"/><circle cx="1138.0" cy="152.3" r="2.6"/><circle cx="1153.9" cy="152.7" r="2.6"/><circle cx="1140.3" cy="160.0" r="2.6"/><circle cx="1132.6" cy="163.5" r="2.6"/><circle cx="1157.6" cy="161.0" r="2.6"/><circle cx="1164.9" cy="160.4" r="2.6"/><circle cx="1130.9" cy="169.4" r="2.6"/><circle cx="1142.4" cy="169.0" r="2.6"/><circle cx="1144.5" cy="165.2" r="2.6"/><circle cx="1148.0" cy="164.8" r="2.6"/><circle cx="1122.5" cy="171.5" r="2.6"/><circle cx="1123.6" cy="174.6" r="2.6"/><circle cx="1125.7" cy="179.8" r="2.6"/><circle cx="1134.0" cy="181.9" r="2.6"/><circle cx="1136.1" cy="178.2" r="2.6"/><circle cx="1124.6" cy="186.1" r="2.6"/><circle cx="1131.9" cy="193.8" r="2.6"/><circle cx="1135.1" cy="187.8" r="2.6"/><circle cx="1144.5" cy="193.4" r="2.6"/><circle cx="1146.6" cy="195.5" r="2.6"/><circle cx="1149.7" cy="194.5" r="2.6"/><circle cx="1153.9" cy="192.4" r="2.6"/><circle cx="1152.4" cy="180.3" r="2.6"/><circle cx="1153.9" cy="175.0" r="2.6"/><circle cx="1162.9" cy="174.2" r="2.6"/><circle cx="1163.3" cy="179.8" r="2.6"/><circle cx="1160.8" cy="187.6" r="2.6"/><circle cx="1166.0" cy="185.1" r="2.6"/><circle cx="1170.6" cy="192.4" r="2.6"/><circle cx="1166.0" cy="195.5" r="2.6"/><circle cx="1171.6" cy="180.9" r="2.6"/><circle cx="1173.7" cy="183.0" r="2.6"/><circle cx="1177.9" cy="180.3" r="2.6"/><circle cx="1172.7" cy="164.6" r="2.6"/><circle cx="1171.6" cy="168.4" r="2.6"/><circle cx="1177.9" cy="171.1" r="2.6"/><circle cx="1151.8" cy="188.2" r="2.6"/><circle cx="1127.8" cy="217.5" r="2.6"/><circle cx="1129.8" cy="220.6" r="2.6"/><circle cx="1136.1" cy="214.3" r="2.6"/><circle cx="1140.3" cy="219.5" r="2.6"/><circle cx="1144.5" cy="224.8" r="2.6"/><circle cx="1152.8" cy="214.3" r="2.6"/><circle cx="1154.9" cy="219.5" r="2.6"/><circle cx="1154.9" cy="226.9" r="2.6"/><circle cx="1156.0" cy="223.7" r="2.6"/><circle cx="1165.4" cy="213.3" r="2.6"/><circle cx="1169.5" cy="215.4" r="2.6"/><circle cx="1173.7" cy="210.1" r="2.6"/><circle cx="1176.9" cy="209.1" r="2.6"/><circle cx="1164.7" cy="207.0" r="2.6"/><circle cx="1170.6" cy="216.4" r="2.6"/><circle cx="1134.0" cy="227.5" r="2.6"/><circle cx="1130.3" cy="232.5" r="2.6"/><circle cx="1135.1" cy="236.3" r="2.6"/><circle cx="1140.3" cy="234.8" r="2.6"/><circle cx="1188.3" cy="128.6" r="2.6"/><circle cx="1202.2" cy="133.2" r="2.6"/><circle cx="1207.5" cy="143.2" r="2.6"/><circle cx="1218.4" cy="142.5" r="2.6"/><circle cx="1203.8" cy="151.1" r="2.6"/><circle cx="1209.9" cy="149.3" r="2.6"/><circle cx="1215.2" cy="149.8" r="2.6"/><circle cx="1220.3" cy="154.2" r="2.6"/><circle cx="1227.9" cy="152.0" r="2.6"/><circle cx="1237.6" cy="155.3" r="2.6"/><circle cx="1255.5" cy="135.9" r="2.6"/><circle cx="1263.4" cy="135.2" r="2.6"/><circle cx="1257.4" cy="154.7" r="2.6"/><circle cx="1183.2" cy="157.9" r="2.6"/><circle cx="1184.3" cy="173.6" r="2.6"/><circle cx="1183.2" cy="177.2" r="2.6"/><circle cx="1192.5" cy="183.8" r="2.6"/><circle cx="1181.9" cy="185.4" r="2.6"/><circle cx="1186.1" cy="189.8" r="2.6"/><circle cx="1182.3" cy="191.6" r="2.6"/><circle cx="1196.9" cy="199.1" r="2.6"/><circle cx="1201.5" cy="206.3" r="2.6"/><circle cx="1186.8" cy="207.2" r="2.6"/><circle cx="1208.2" cy="217.0" r="2.6"/><circle cx="1235.8" cy="188.5" r="2.6"/><circle cx="1077.2" cy="252.7" r="2.6"/></g><line x1="482.7" y1="318.6" x2="1261.5" y2="195" stroke="#aa50aa" stroke-width="1.3"/><g fill="#f48a14" fill-opacity="0.68"><circle cx="514.7" cy="312.0" r="2.6"/><circle cx="516.0" cy="316.5" r="2.6"/><circle cx="518.4" cy="313.1" r="2.6"/><circle cx="518.9" cy="312.6" r="2.6"/><circle cx="521.2" cy="309.1" r="2.6"/><circle cx="525.2" cy="308.0" r="2.6"/><circle cx="527.3" cy="306.4" r="2.6"/><circle cx="529.9" cy="306.5" r="2.6"/><circle cx="532.9" cy="308.9" r="2.6"/><circle cx="534.3" cy="311.1" r="2.6"/><circle cx="536.2" cy="312.0" r="2.6"/><circle cx="538.9" cy="313.0" r="2.6"/><circle cx="540.5" cy="311.6" r="2.6"/><circle cx="544.2" cy="312.4" r="2.6"/><circle cx="544.4" cy="310.8" r="2.6"/><circle cx="545.0" cy="308.5" r="2.6"/><circle cx="544.9" cy="305.8" r="2.6"/><circle cx="545.5" cy="303.6" r="2.6"/><circle cx="548.5" cy="303.7" r="2.6"/><circle cx="549.2" cy="305.8" r="2.6"/><circle cx="551.4" cy="309.3" r="2.6"/><circle cx="551.3" cy="312.0" r="2.6"/><circle cx="553.8" cy="310.6" r="2.6"/><circle cx="556.2" cy="309.4" r="2.6"/><circle cx="558.8" cy="308.4" r="2.6"/><circle cx="561.2" cy="306.9" r="2.6"/><circle cx="563.7" cy="305.4" r="2.6"/><circle cx="564.4" cy="300.8" r="2.6"/><circle cx="565.9" cy="299.9" r="2.6"/><circle cx="567.4" cy="301.2" r="2.6"/><circle cx="568.5" cy="302.6" r="2.6"/><circle cx="570.2" cy="305.5" r="2.6"/><circle cx="569.6" cy="307.1" r="2.6"/><circle cx="571.3" cy="311.9" r="2.6"/><circle cx="572.3" cy="311.3" r="2.6"/><circle cx="575.5" cy="309.7" r="2.6"/><circle cx="577.8" cy="310.9" r="2.6"/><circle cx="581.5" cy="309.1" r="2.6"/><circle cx="583.5" cy="308.9" r="2.6"/><circle cx="586.2" cy="309.4" r="2.6"/><circle cx="590.9" cy="309.7" r="2.6"/><circle cx="592.9" cy="307.8" r="2.6"/><circle cx="595.2" cy="303.9" r="2.6"/><circle cx="599.0" cy="304.1" r="2.6"/><circle cx="601.5" cy="305.2" r="2.6"/><circle cx="604.1" cy="306.6" r="2.6"/><circle cx="604.8" cy="310.2" r="2.6"/><circle cx="607.2" cy="312.4" r="2.6"/><circle cx="610.1" cy="309.5" r="2.6"/><circle cx="611.1" cy="308.1" r="2.6"/><circle cx="613.2" cy="306.7" r="2.6"/><circle cx="615.2" cy="305.6" r="2.6"/><circle cx="618.2" cy="304.3" r="2.6"/><circle cx="619.3" cy="303.7" r="2.6"/><circle cx="621.7" cy="304.4" r="2.6"/><circle cx="625.9" cy="306.5" r="2.6"/><circle cx="626.1" cy="308.6" r="2.6"/><circle cx="627.7" cy="308.5" r="2.6"/><circle cx="628.8" cy="307.3" r="2.6"/><circle cx="632.0" cy="304.7" r="2.6"/><circle cx="633.8" cy="304.2" r="2.6"/><circle cx="635.0" cy="306.7" r="2.6"/><circle cx="636.2" cy="310.2" r="2.6"/><circle cx="638.1" cy="308.2" r="2.6"/><circle cx="637.0" cy="307.7" r="2.6"/><circle cx="633.8" cy="304.0" r="2.6"/><circle cx="635.1" cy="306.7" r="2.6"/><circle cx="635.2" cy="309.7" r="2.6"/><circle cx="637.9" cy="309.8" r="2.6"/><circle cx="640.5" cy="308.7" r="2.6"/><circle cx="643.0" cy="309.9" r="2.6"/><circle cx="644.3" cy="313.3" r="2.6"/><circle cx="645.4" cy="313.8" r="2.6"/><circle cx="648.0" cy="315.5" r="2.6"/><circle cx="647.8" cy="319.2" r="2.6"/><circle cx="647.2" cy="320.6" r="2.6"/><circle cx="644.8" cy="323.3" r="2.6"/><circle cx="644.2" cy="326.2" r="2.6"/><circle cx="642.7" cy="328.4" r="2.6"/><circle cx="642.7" cy="331.6" r="2.6"/><circle cx="644.9" cy="333.3" r="2.6"/><circle cx="645.2" cy="330.7" r="2.6"/><circle cx="647.4" cy="329.0" r="2.6"/><circle cx="649.6" cy="328.5" r="2.6"/><circle cx="650.0" cy="325.4" r="2.6"/><circle cx="652.3" cy="330.5" r="2.6"/><circle cx="654.5" cy="333.1" r="2.6"/><circle cx="655.3" cy="334.1" r="2.6"/><circle cx="658.8" cy="335.1" r="2.6"/><circle cx="661.2" cy="336.5" r="2.6"/><circle cx="663.1" cy="335.1" r="2.6"/><circle cx="666.0" cy="333.1" r="2.6"/><circle cx="665.9" cy="333.3" r="2.6"/><circle cx="669.9" cy="334.5" r="2.6"/><circle cx="671.1" cy="335.5" r="2.6"/><circle cx="674.3" cy="332.3" r="2.6"/><circle cx="676.1" cy="332.0" r="2.6"/><circle cx="678.1" cy="332.4" r="2.6"/><circle cx="679.5" cy="333.1" r="2.6"/><circle cx="683.8" cy="332.5" r="2.6"/><circle cx="686.1" cy="331.3" r="2.6"/><circle cx="688.2" cy="329.2" r="2.6"/><circle cx="692.7" cy="330.6" r="2.6"/><circle cx="694.4" cy="332.7" r="2.6"/><circle cx="696.0" cy="333.6" r="2.6"/><circle cx="696.4" cy="335.1" r="2.6"/><circle cx="698.9" cy="335.2" r="2.6"/><circle cx="702.0" cy="336.8" r="2.6"/><circle cx="703.7" cy="338.8" r="2.6"/><circle cx="707.3" cy="336.4" r="2.6"/><circle cx="709.9" cy="336.4" r="2.6"/><circle cx="714.7" cy="337.3" r="2.6"/><circle cx="717.1" cy="334.1" r="2.6"/><circle cx="720.2" cy="333.6" r="2.6"/><circle cx="722.7" cy="334.1" r="2.6"/><circle cx="726.1" cy="332.7" r="2.6"/><circle cx="727.7" cy="329.5" r="2.6"/><circle cx="729.1" cy="329.9" r="2.6"/><circle cx="727.7" cy="331.9" r="2.6"/><circle cx="727.8" cy="335.7" r="2.6"/><circle cx="729.5" cy="337.7" r="2.6"/><circle cx="731.6" cy="338.9" r="2.6"/><circle cx="732.3" cy="342.4" r="2.6"/><circle cx="735.1" cy="340.6" r="2.6"/><circle cx="739.6" cy="340.7" r="2.6"/><circle cx="740.5" cy="339.4" r="2.6"/><circle cx="743.7" cy="338.5" r="2.6"/><circle cx="745.6" cy="336.8" r="2.6"/><circle cx="748.0" cy="333.7" r="2.6"/><circle cx="748.6" cy="336.1" r="2.6"/><circle cx="749.8" cy="339.0" r="2.6"/><circle cx="753.2" cy="340.2" r="2.6"/><circle cx="754.9" cy="342.1" r="2.6"/></g><g fill="#4a4af4" fill-opacity="0.68"><circle cx="754.0" cy="341.7" r="2.6"/><circle cx="756.6" cy="340.8" r="2.6"/><circle cx="759.4" cy="338.5" r="2.6"/><circle cx="761.5" cy="337.2" r="2.6"/><circle cx="763.4" cy="337.8" r="2.6"/><circle cx="766.3" cy="339.6" r="2.6"/><circle cx="767.2" cy="343.9" r="2.6"/><circle cx="769.5" cy="342.1" r="2.6"/><circle cx="771.8" cy="342.3" r="2.6"/><circle cx="774.1" cy="341.4" r="2.6"/><circle cx="778.1" cy="342.1" r="2.6"/><circle cx="781.3" cy="339.9" r="2.6"/><circle cx="783.4" cy="339.8" r="2.6"/><circle cx="783.7" cy="341.8" r="2.6"/><circle cx="785.1" cy="345.2" r="2.6"/><circle cx="786.4" cy="348.1" r="2.6"/><circle cx="787.0" cy="350.3" r="2.6"/><circle cx="787.4" cy="353.4" r="2.6"/><circle cx="786.7" cy="356.7" r="2.6"/><circle cx="788.7" cy="359.0" r="2.6"/><circle cx="789.4" cy="360.9" r="2.6"/><circle cx="787.2" cy="363.2" r="2.6"/><circle cx="788.4" cy="365.9" r="2.6"/><circle cx="786.3" cy="369.9" r="2.6"/><circle cx="786.2" cy="372.5" r="2.6"/><circle cx="787.5" cy="375.7" r="2.6"/><circle cx="788.4" cy="378.4" r="2.6"/><circle cx="787.9" cy="379.7" r="2.6"/><circle cx="787.6" cy="383.3" r="2.6"/><circle cx="787.4" cy="385.0" r="2.6"/><circle cx="788.5" cy="390.0" r="2.6"/><circle cx="790.9" cy="387.6" r="2.6"/><circle cx="792.8" cy="385.5" r="2.6"/><circle cx="792.9" cy="380.8" r="2.6"/><circle cx="795.1" cy="379.6" r="2.6"/><circle cx="798.3" cy="376.9" r="2.6"/><circle cx="799.7" cy="374.7" r="2.6"/><circle cx="800.7" cy="377.0" r="2.6"/><circle cx="801.3" cy="379.3" r="2.6"/><circle cx="805.3" cy="381.3" r="2.6"/><circle cx="807.0" cy="382.9" r="2.6"/><circle cx="808.5" cy="382.6" r="2.6"/><circle cx="810.1" cy="380.4" r="2.6"/><circle cx="811.9" cy="379.6" r="2.6"/><circle cx="814.9" cy="377.4" r="2.6"/><circle cx="815.4" cy="377.7" r="2.6"/><circle cx="819.3" cy="375.0" r="2.6"/><circle cx="820.5" cy="373.3" r="2.6"/><circle cx="821.8" cy="373.7" r="2.6"/><circle cx="823.6" cy="375.9" r="2.6"/><circle cx="825.7" cy="376.5" r="2.6"/><circle cx="829.1" cy="376.2" r="2.6"/><circle cx="831.1" cy="373.8" r="2.6"/><circle cx="833.5" cy="371.7" r="2.6"/><circle cx="836.0" cy="367.9" r="2.6"/><circle cx="837.4" cy="365.8" r="2.6"/><circle cx="840.1" cy="364.9" r="2.6"/><circle cx="841.1" cy="367.1" r="2.6"/><circle cx="843.1" cy="370.1" r="2.6"/><circle cx="845.4" cy="370.1" r="2.6"/><circle cx="848.8" cy="368.7" r="2.6"/><circle cx="850.4" cy="367.6" r="2.6"/><circle cx="852.7" cy="365.3" r="2.6"/><circle cx="855.3" cy="365.7" r="2.6"/><circle cx="859.3" cy="365.0" r="2.6"/><circle cx="861.8" cy="364.6" r="2.6"/><circle cx="864.0" cy="361.3" r="2.6"/><circle cx="866.2" cy="360.8" r="2.6"/><circle cx="869.8" cy="359.7" r="2.6"/><circle cx="872.4" cy="356.7" r="2.6"/><circle cx="873.2" cy="355.2" r="2.6"/><circle cx="875.4" cy="354.8" r="2.6"/><circle cx="878.9" cy="353.8" r="2.6"/><circle cx="879.8" cy="352.2" r="2.6"/><circle cx="882.1" cy="349.8" r="2.6"/><circle cx="886.2" cy="348.5" r="2.6"/><circle cx="889.0" cy="348.9" r="2.6"/><circle cx="1159.1" cy="197.0" r="2.6"/><circle cx="1158.5" cy="207.6" r="2.6"/><circle cx="1131.3" cy="242.5" r="2.6"/><circle cx="893.4" cy="347.3" r="2.6"/><circle cx="895.2" cy="349.0" r="2.6"/><circle cx="899.6" cy="346.4" r="2.6"/><circle cx="903.2" cy="345.5" r="2.6"/><circle cx="906.8" cy="342.8" r="2.6"/><circle cx="912.1" cy="336.5" r="2.6"/><circle cx="913.0" cy="341.0" r="2.6"/><circle cx="915.7" cy="338.3" r="2.6"/><circle cx="919.3" cy="334.8" r="2.6"/><circle cx="924.6" cy="330.3" r="2.6"/><circle cx="930.0" cy="325.8" r="2.6"/><circle cx="931.7" cy="327.6" r="2.6"/><circle cx="933.5" cy="328.5" r="2.6"/><circle cx="937.1" cy="324.1" r="2.6"/><circle cx="946.9" cy="317.8" r="2.6"/><circle cx="947.8" cy="314.6" r="2.6"/><circle cx="949.6" cy="323.2" r="2.6"/><circle cx="952.3" cy="322.3" r="2.6"/><circle cx="956.7" cy="318.3" r="2.6"/><circle cx="962.4" cy="312.1" r="2.6"/><circle cx="965.7" cy="309.8" r="2.6"/><circle cx="967.4" cy="312.5" r="2.6"/><circle cx="973.7" cy="305.7" r="2.6"/><circle cx="978.1" cy="303.5" r="2.6"/><circle cx="981.7" cy="300.9" r="2.6"/><circle cx="984.4" cy="299.1" r="2.6"/><circle cx="987.1" cy="298.5" r="2.6"/><circle cx="993.3" cy="292.3" r="2.6"/><circle cx="996.9" cy="291.0" r="2.6"/><circle cx="998.7" cy="290.1" r="2.6"/><circle cx="1001.3" cy="292.8" r="2.6"/><circle cx="1002.2" cy="299.1" r="2.6"/><circle cx="1001.3" cy="285.7" r="2.6"/><circle cx="1002.2" cy="282.1" r="2.6"/><circle cx="1003.1" cy="280.3" r="2.6"/><circle cx="1009.4" cy="296.8" r="2.6"/><circle cx="1018.8" cy="287.5" r="2.6"/><circle cx="1022.2" cy="282.1" r="2.6"/><circle cx="1027.2" cy="279.1" r="2.6"/><circle cx="1030.8" cy="278.6" r="2.6"/><circle cx="1035.2" cy="276.4" r="2.6"/><circle cx="1038.8" cy="277.1" r="2.6"/><circle cx="1041.1" cy="281.8" r="2.6"/><circle cx="1050.4" cy="269.6" r="2.6"/><circle cx="1056.7" cy="263.9" r="2.6"/><circle cx="1059.3" cy="258.9" r="2.6"/><circle cx="1059.3" cy="264.3" r="2.6"/><circle cx="1059.3" cy="273.2" r="2.6"/><circle cx="1068.6" cy="272.8" r="2.6"/><circle cx="1081.6" cy="272.8" r="2.6"/><circle cx="1102.2" cy="264.3" r="2.6"/></g></svg><!--/CHART-->
<!-- AXIS LABELS -->
<div class="t" style="left:451px;top:117px;font-size:10px;color:#555">77</div>
<div class="t" style="left:451px;top:168px;font-size:10px;color:#555">76</div>
<div class="t" style="left:451px;top:220px;font-size:10px;color:#555">75</div>
<div class="t" style="left:451px;top:272px;font-size:10px;color:#555">74</div>
<div class="t" style="left:451px;top:324px;font-size:10px;color:#555">73</div>
<div class="t" style="left:451px;top:375px;font-size:10px;color:#555">72</div>
<div class="t" style="left:461.5px;width:80px;text-align:center;top:413px;font-size:9.7px;color:#555">75</div>
<div class="t" style="left:546.4px;width:80px;text-align:center;top:413px;font-size:9.7px;color:#555">77.5</div>
<div class="t" style="left:631.4px;width:80px;text-align:center;top:413px;font-size:9.7px;color:#555">80</div>
<div class="t" style="left:716.3px;width:80px;text-align:center;top:413px;font-size:9.7px;color:#555">82.5</div>
<div class="t" style="left:801.2px;width:80px;text-align:center;top:413px;font-size:9.7px;color:#555">85</div>
<div class="t" style="left:886.1px;width:80px;text-align:center;top:413px;font-size:9.7px;color:#555">87.5</div>
<div class="t" style="left:971.1px;width:80px;text-align:center;top:413px;font-size:9.7px;color:#555">90</div>
<div class="t" style="left:1056.0px;width:80px;text-align:center;top:413px;font-size:9.7px;color:#555">92.5</div>
<div class="t" style="left:1140.9px;width:80px;text-align:center;top:413px;font-size:9.7px;color:#555">95</div>
<div class="t" style="left:1225.8px;width:80px;text-align:center;top:413px;font-size:9.7px;color:#555">97.5</div>
<div class="t" style="left:833px;top:429px;font-size:10.7px;color:#4d5b8c">Temperature (°F)</div>
<div class="t" style="left:406px;top:242px;width:62px;text-align:center;font-size:10.2px;color:#2a8a70;transform:rotate(-90deg);transform-origin:31px 5px">Wet Bulb (°F)</div>
<!-- BOTTOM LEFT GRAY AREA -->
<div class="a" style="left:418px;top:538px;width:871px;height:57px;background:#f6f6f8"></div>

<!-- LEGEND -->
<svg style="left:438px;top:458px" width="13" height="11" viewBox="0 0 13 11"><path d="M0.8 8 L3 1.5 L5.5 8.5 L8 3.5 L10 9 L12.2 7" stroke="#9b2a9b" stroke-width="1.5" fill="none"/></svg>
<div class="t" style="left:457px;top:459px;font-size:10.4px;color:#333"><b>Prediction</b> <span style="color:#555;font-size:9.6px">( r<sup style="font-size:6px;vertical-align:4px">2</sup> = 0.200 )</span></div>

<!-- TIMELINE -->
<svg style="left:425px;top:482px" width="8" height="12" viewBox="0 0 8 12"><path d="M4 0v10M0.8 6.5L4 10.5L7.2 6.5" stroke="#007960" stroke-width="1.8" fill="none"/></svg>
<div class="t" style="left:440px;top:484px;font-size:9.2px;color:#2c7d68">6/27/2019 9:59 AM <span style="text-decoration:underline">PDT</span></div>
<svg style="left:763px;top:482px" width="13" height="12" viewBox="0 0 13 12"><path d="M6.5 0.5L0.5 6L6.5 11.5zM12.5 0.5L6.5 6L12.5 11.5z" fill="#007960"/></svg>
<svg style="left:788px;top:482px" width="7" height="12" viewBox="0 0 7 12"><path d="M6.5 0.5L0.5 6L6.5 11.5z" fill="#007960"/></svg>
<div class="t" style="left:807px;top:484px;font-size:9.2px;color:#2c7d68">1 day</div>
<svg style="left:842px;top:482px" width="7" height="12" viewBox="0 0 7 12"><path d="M0.5 0.5L6.5 6L0.5 11.5z" fill="#007960"/></svg>
<svg style="left:862px;top:482px" width="13" height="12" viewBox="0 0 13 12"><path d="M0.5 0.5L6.5 6L0.5 11.5zM6.5 0.5L12.5 6L6.5 11.5z" fill="#007960"/></svg>
<svg style="left:886px;top:482px" width="9" height="12" viewBox="0 0 9 12"><path d="M0.5 0.5L6 6L0.5 11.5zM6.3 0.5h2.2v11H6.3z" fill="#007960"/></svg>
<div class="t" style="left:1178px;top:484px;font-size:9.2px;color:#2c7d68">6/28/2019 9:59 AM <span style="text-decoration:underline">PDT</span></div>

<!-- NAV CHART -->
<div class="a" style="left:443px;top:505px;width:821px;height:29px;border:1.5px solid #7a9a90;border-radius:2px;background:#c9c7c7;overflow:hidden">
 <div class="a" style="left:409px;top:0;width:205px;height:27px;background:#a4a4fa"></div>
 <div class="a" style="left:614px;top:0;width:210px;height:27px;background:#f6c68a"></div>
</div>
<svg style="left:849px;top:499px" width="8" height="6" viewBox="0 0 8 6"><path d="M0 0h8L4 5.5z" fill="#8c7cf0"/></svg>
<svg style="left:1054px;top:499px" width="8" height="6" viewBox="0 0 8 6"><path d="M0 0h8L4 5.5z" fill="#f0a050"/></svg>
<!--NAV--><svg style="left:0;top:0" width="1289" height="766" viewBox="0 0 1289 766"><polyline points="1058.7,524.1 1115.0,526.4 1182.5,528.6 1262.3,531.5" fill="none" stroke="#9a50a0" stroke-width="1.1" stroke-linejoin="round"/><polyline points="443.3,532.1 450.9,530.4 461.7,527.2 483.4,527.6 505.2,527.8 526.9,527.2 546.4,526.7 557.3,522.8 574.7,521.7 592.0,522.8 611.6,521.7 618.1,518.5 631.1,517.4 644.2,513.0 657.2,511.9 678.9,511.9 700.6,510.9 721.7,509.8 743.4,510.9 765.2,509.1 786.9,509.8 808.6,509.1 830.3,508.3 836.8,506.5 843.4,507.6 853.1,509.8 860.7,512.6 884.6,515.2 917.2,517.0 949.8,519.1 980.0,520.7 1025.0,521.9 1058.7,523.4 1092.5,524.8 1137.5,526.4 1182.5,527.5 1227.5,529.3 1262.3,530.9" fill="none" stroke="#5a5aa8" stroke-width="1.3" stroke-linejoin="round"/><polyline points="443.3,522.1 446.0,521.9 448.7,521.5 451.6,519.8 454.5,517.0 457.4,515.5 460.6,512.3 463.9,513.4 466.8,515.6 469.7,515.4 472.6,516.9 475.1,514.1 477.7,515.0 480.2,514.0 482.7,514.7 485.3,514.6 487.8,512.5 490.3,513.4 492.8,513.8 495.3,516.1 497.7,515.8 500.2,514.1 502.7,516.3 505.2,514.4 507.7,515.8 510.1,514.0 512.6,513.4 515.1,516.0 517.6,513.7 520.0,513.6 522.5,515.8 525.0,515.8 527.5,514.2 530.0,516.6 532.4,515.6 534.9,516.3 537.4,515.1 539.9,517.7 542.8,516.5 545.7,517.1 548.6,516.5 553.0,509.2 557.3,509.4 561.6,514.1 563.8,513.0 566.0,511.6 568.2,511.3 571.1,514.1 573.9,514.0 576.8,518.0 579.0,515.2 581.2,513.5 584.1,517.3 587.0,518.4 589.9,520.0 593.1,518.9 596.4,518.1 599.3,516.3 602.2,519.7 605.1,517.0 608.0,517.8 610.9,516.7 613.8,512.6 618.1,511.8 620.8,510.2 623.5,510.6 626.3,508.5 629.0,508.3 632.2,515.3 634.6,516.5 637.0,512.7 639.4,513.2 641.8,512.5 644.2,511.2 647.1,508.2 650.0,507.1 652.9,506.6 657.2,515.0 660.5,505.2 663.7,512.8 666.4,512.7 669.2,512.6 671.9,509.7 674.6,512.3 677.9,512.3 681.1,515.8 684.4,514.0 687.6,512.2 690.5,510.0 693.4,511.5 696.3,509.9 700.0,511.4 703.2,510.9 706.5,509.9 709.8,509.0 713.0,508.7 716.2,511.5 719.5,513.6 723.9,509.8 726.8,511.3 729.7,516.1 732.6,516.4 735.3,514.4 738.0,512.2 740.7,511.7 743.4,510.8 745.6,510.7 747.8,511.7 750.0,511.6 753.2,517.1 756.5,517.0 759.8,513.6 763.0,509.8 766.2,510.2 769.5,514.8 772.1,514.5 774.7,512.4 777.3,511.8 779.9,508.5 782.5,508.5 785.4,510.1 788.3,514.9 791.2,515.6 794.1,514.7 797.0,515.0 799.9,513.1 802.8,515.0 805.7,514.7 808.6,516.3 811.5,515.9 814.4,514.0 817.3,512.3 820.5,514.3 823.8,515.2 827.0,513.8 830.3,513.6 833.5,511.3 836.8,508.0 839.0,510.8 841.2,513.6 844.1,513.9 847.0,515.6 849.9,518.3 853.1,516.4 856.4,520.6 867.2,521.7 884.6,523.5 906.3,526.1 928.1,527.8 949.8,529.3 980.0,530.9 1020.5,532.0 1029.5,529.3 1047.5,527.5 1058.7,527.0 1092.5,525.9 1137.5,526.4 1160.0,524.1 1205.0,524.1 1262.3,524.8" fill="none" stroke="#2e9a62" stroke-width="1.3" stroke-linejoin="round"/></svg><!--/NAV-->

<!-- SLIDER -->
<div class="a" style="left:440px;top:545px;width:697px;height:12px;border:1px solid #c4c4c4;border-right:none;border-radius:2px 0 0 2px;background:#fff"></div>
<div class="a" style="left:1136px;top:545px;width:120px;height:12px;border:2px solid #1c7a62;background:#fff"></div>
<div class="a" style="left:1134px;top:543px;width:5px;height:16px;border:1px solid #1c7a62;background:#fff;border-radius:1px"></div>
<div class="a" style="left:1253px;top:543px;width:5px;height:16px;border:1px solid #1c7a62;background:#fff;border-radius:1px"></div>
<svg style="left:1264px;top:546px" width="11" height="12" viewBox="0 0 11 12"><path d="M0.5 0.5h4v3.5l-1.5 2 1.5 2v3.5h-4v-3.5l1.5-2-1.5-2zM6.5 0.5h4v3.5l-1.5 2 1.5 2v3.5h-4v-3.5l1.5-2-1.5-2z" fill="#1c7a62"/><path d="M1.8 2.5v3M7.8 2.5v3M1.8 7v3M7.8 7v3" stroke="#cfe6dc" stroke-width=".8"/></svg>
<div class="a" style="left:506.6px;top:557px;width:1px;height:3px;background:#dcdcdc"></div><div class="t" style="left:476.6px;width:60px;text-align:center;top:561px;font-size:8.4px;color:#7a7a7a">Jun 22</div>
<div class="a" style="left:623.4px;top:557px;width:1px;height:3px;background:#dcdcdc"></div><div class="t" style="left:593.4px;width:60px;text-align:center;top:561px;font-size:8.4px;color:#7a7a7a">Jun 23</div>
<div class="a" style="left:740.0px;top:557px;width:1px;height:3px;background:#dcdcdc"></div><div class="t" style="left:710.0px;width:60px;text-align:center;top:561px;font-size:8.4px;color:#7a7a7a">Jun 24</div>
<div class="a" style="left:856.5px;top:557px;width:1px;height:3px;background:#dcdcdc"></div><div class="t" style="left:826.5px;width:60px;text-align:center;top:561px;font-size:8.4px;color:#7a7a7a">Jun 25</div>
<div class="a" style="left:973.0px;top:557px;width:1px;height:3px;background:#dcdcdc"></div><div class="t" style="left:943.0px;width:60px;text-align:center;top:561px;font-size:8.4px;color:#7a7a7a">Jun 26</div>
<div class="a" style="left:1089.5px;top:557px;width:1px;height:3px;background:#dcdcdc"></div><div class="t" style="left:1059.5px;width:60px;text-align:center;top:561px;font-size:8.4px;color:#7a7a7a">Jun 27</div>
<div class="a" style="left:1206.0px;top:557px;width:1px;height:3px;background:#dcdcdc"></div><div class="t" style="left:1176.0px;width:60px;text-align:center;top:561px;font-size:8.4px;color:#7a7a7a">Jun 28</div>

<svg style="left:425px;top:577px" width="8" height="12" viewBox="0 0 8 12"><path d="M4 12V2M0.8 5.5L4 1.5L7.2 5.5" stroke="#007960" stroke-width="1.8" fill="none"/></svg>
<div class="t" style="left:440px;top:580px;font-size:9.6px;color:#2c7d68">6/21/2019</div>
<div class="t" style="left:843px;top:580px;font-size:9.3px;color:#2c7d68">7 days</div>
<div class="t" style="left:1231px;top:580px;font-size:9.6px;color:#3e6a5c">6/28/2019</div>

<!-- DETAILS BAR -->
<div class="a" style="left:417px;top:594px;width:872px;height:22px;background:#007960"></div>
<svg style="left:426px;top:600px" width="13" height="11" viewBox="0 0 13 11"><path d="M0.6 0v10.2h12.4" stroke="#fff" stroke-width="1.2" fill="none"/><path d="M1.8 9.3V6.5L4 2.5 6 5.5 8 4 10 5.5 11.8 4.5V9.3z" fill="#fff"/></svg>
<div class="t" style="left:441px;top:601px;font-size:10.3px;color:#fff;-webkit-text-stroke:0.3px #fff">Details</div>

<!-- TABLE -->
<div class="a" style="left:417px;top:639px;width:872px;height:1px;background:#e4e4e4"></div>
<div class="a" style="left:417px;top:640px;width:872px;height:19px;background:#f7f7f7"></div>
<div class="a" style="left:417px;top:659px;width:872px;height:1px;background:#e4e4e4"></div>
<div class="a" style="left:417px;top:679px;width:872px;height:1px;background:#e4e4e4"></div>
<div class="a" style="left:417px;top:680px;width:872px;height:18px;background:#f7f7f7"></div>

<svg style="left:483px;top:624px" width="8" height="8" viewBox="0 0 8 8"><path d="M1 1l6 6M7 1L1 7" stroke="#666" stroke-width="2.2"/></svg>
<div class="a" style="left:500px;top:623px;width:10px;height:10px;border:1px solid #888;border-radius:1px"></div>
<svg style="left:542px;top:622px" width="7" height="12" viewBox="0 0 7 12"><path d="M0.5 5L3.5 1.5L6.5 5zM0.5 7L3.5 10.5L6.5 7z" fill="#666"/></svg>
<div class="t" style="left:554px;top:624px;font-size:10.4px;color:#444;-webkit-text-stroke:0.4px #444">Name</div>
<svg style="left:589px;top:622px" width="7" height="12" viewBox="0 0 7 12"><path d="M0.5 5L3.5 1.5L6.5 5zM0.5 7L3.5 10.5L6.5 7z" fill="#777"/></svg>
<div class="t" style="left:1094px;top:624px;font-size:10.6px;color:#444;-webkit-text-stroke:0.2px #444">Color</div>
<svg style="left:1126px;top:622px" width="7" height="12" viewBox="0 0 7 12"><path d="M0.5 5L3.5 1.5L6.5 5zM0.5 7L3.5 10.5L6.5 7z" fill="#777"/></svg>
<div class="t" style="left:1138px;top:624px;font-size:10.6px;color:#444;-webkit-text-stroke:0.4px #444">Assets</div>
<div class="t" style="left:1175px;top:624px;font-size:10.4px;color:#2c8a6c;-webkit-text-stroke:0.4px #2c8a6c">Lane</div>
<svg style="left:1204px;top:623px" width="7" height="5" viewBox="0 0 7 5"><path d="M0.5 4.5L3.5 0.5L6.5 4.5z" fill="#007960"/></svg>
<svg style="left:443px;top:643.5px" width="11" height="12" viewBox="0 0 11 12"><path d="M10.5 0.5C7.5 0.5 5 2 3.5 4.5L1 4.8 0 6.5l2.6.6L4 8.5l.6 2.6 1.7-1 .3-2.5C9 6 10.5 3.5 10.5.5z" fill="#007960"/><path d="M2.5 8.5L.5 11.5 3.5 9.5" fill="#007960"/></svg>
<svg style="left:464.5px;top:643.7px" width="11" height="11" viewBox="0 0 11 11"><circle cx="5.5" cy="5.5" r="5" fill="#007960"/><path d="M4.3 4.6h1.9v3.6h.8v.9H4.2v-.9h.8V5.5h-.7z" fill="#fff"/><circle cx="5.6" cy="2.9" r="1" fill="#fff"/></svg>
<svg style="left:483px;top:645.5px" width="8" height="8" viewBox="0 0 8 8"><path d="M1 1l6 6M7 1L1 7" stroke="#007960" stroke-width="2.2"/></svg>
<div class="a" style="left:500px;top:644.5px;width:10px;height:10px;border:1px solid #888;border-radius:1px;background:#fff"></div>
<svg style="left:519px;top:643.5px" width="14" height="11" viewBox="0 0 14 11"><path d="M0.8 8 L3.2 1.5 L5.8 8.5 L8.5 3.5 L10.5 9 L13 7" stroke="#3d4aa0" stroke-width="1.5" fill="none"/></svg>
<div class="t" style="left:538px;top:644.5px;font-size:10.4px;color:#444">°F</div>
<div class="t" style="left:554px;top:644.5px;font-size:11px;color:#3a3a3a;-webkit-text-stroke:0.3px #3a3a3a">Temperature</div>
<div class="a" style="left:1107px;top:642.5px;width:13px;height:13px;background:#4a55b0;border:1px solid #555"></div>
<div class="t" style="left:1138px;top:644.5px;font-size:9.7px;color:#2c8a6c;text-decoration:underline">Area A</div>
<div class="t" style="left:1204px;top:644.5px;font-size:9.6px;color:#444">1</div>
<svg style="left:443px;top:663.0px" width="11" height="12" viewBox="0 0 11 12"><path d="M10.5 0.5C7.5 0.5 5 2 3.5 4.5L1 4.8 0 6.5l2.6.6L4 8.5l.6 2.6 1.7-1 .3-2.5C9 6 10.5 3.5 10.5.5z" fill="#007960"/><path d="M2.5 8.5L.5 11.5 3.5 9.5" fill="#007960"/></svg>
<svg style="left:464.5px;top:663.2px" width="11" height="11" viewBox="0 0 11 11"><circle cx="5.5" cy="5.5" r="5" fill="#007960"/><path d="M4.3 4.6h1.9v3.6h.8v.9H4.2v-.9h.8V5.5h-.7z" fill="#fff"/><circle cx="5.6" cy="2.9" r="1" fill="#fff"/></svg>
<svg style="left:483px;top:665.0px" width="8" height="8" viewBox="0 0 8 8"><path d="M1 1l6 6M7 1L1 7" stroke="#007960" stroke-width="2.2"/></svg>
<div class="a" style="left:500px;top:664.0px;width:10px;height:10px;border:1px solid #888;border-radius:1px;background:#fff"></div>
<svg style="left:519px;top:663.0px" width="14" height="11" viewBox="0 0 14 11"><path d="M0.8 8 L3.2 1.5 L5.8 8.5 L8.5 3.5 L10.5 9 L13 7" stroke="#1c9a4a" stroke-width="1.5" fill="none"/></svg>
<div class="t" style="left:538px;top:664.0px;font-size:10.4px;color:#444">°F</div>
<div class="t" style="left:554px;top:664.0px;font-size:10.6px;color:#3a3a3a;-webkit-text-stroke:0.3px #3a3a3a">Wet Bulb</div>
<div class="a" style="left:1107px;top:662.0px;width:13px;height:13px;background:#1b8a4a;border:1px solid #555"></div>
<div class="t" style="left:1138px;top:664.0px;font-size:9.7px;color:#2c8a6c;text-decoration:underline">Area A</div>
<div class="t" style="left:1204px;top:664.0px;font-size:9.6px;color:#444">2</div>
<svg style="left:421px;top:682.5px" width="12" height="11" viewBox="0 0 12 11"><path d="M1 2.5h5M1 2.5v8h8V6" stroke="#2c8a6c" stroke-width="1" fill="none"/><path d="M4.5 7.5l.6-2.2L10 .6l1.5 1.5-4.9 4.7z" stroke="#2c8a6c" stroke-width="1" fill="none"/></svg><svg style="left:443px;top:682.5px" width="11" height="12" viewBox="0 0 11 12"><path d="M10.5 0.5C7.5 0.5 5 2 3.5 4.5L1 4.8 0 6.5l2.6.6L4 8.5l.6 2.6 1.7-1 .3-2.5C9 6 10.5 3.5 10.5.5z" fill="#007960"/><path d="M2.5 8.5L.5 11.5 3.5 9.5" fill="#007960"/></svg>
<svg style="left:464.5px;top:682.7px" width="11" height="11" viewBox="0 0 11 11"><circle cx="5.5" cy="5.5" r="5" fill="#007960"/><path d="M4.3 4.6h1.9v3.6h.8v.9H4.2v-.9h.8V5.5h-.7z" fill="#fff"/><circle cx="5.6" cy="2.9" r="1" fill="#fff"/></svg>
<svg style="left:483px;top:684.5px" width="8" height="8" viewBox="0 0 8 8"><path d="M1 1l6 6M7 1L1 7" stroke="#007960" stroke-width="2.2"/></svg>
<div class="a" style="left:500px;top:683.5px;width:10px;height:10px;border:1px solid #888;border-radius:1px;background:#fff"></div>
<svg style="left:519px;top:682.5px" width="14" height="11" viewBox="0 0 14 11"><path d="M0.8 8 L3.2 1.5 L5.8 8.5 L8.5 3.5 L10.5 9 L13 7" stroke="#9b2a9b" stroke-width="1.5" fill="none"/></svg>
<div class="t" style="left:538px;top:683.5px;font-size:10.4px;color:#444">°F</div>
<div class="t" style="left:554px;top:683.5px;font-size:11px;color:#3a3a3a;-webkit-text-stroke:0.3px #3a3a3a">Prediction</div>
<div class="a" style="left:1107px;top:681.5px;width:13px;height:13px;background:#9b259b;border:1px solid #555"></div>
<div class="t" style="left:1138px;top:683.5px;font-size:9.7px;color:#2c8a6c;text-decoration:underline">Area A</div>
<div class="t" style="left:1204px;top:683.5px;font-size:9.6px;color:#444">3</div>

<div class="a" style="left:1288px;top:82px;width:1px;height:512px;background:#ececec"></div>
<div class="a" style="left:1288px;top:616px;width:1px;height:150px;background:#d0d0d0"></div>
<!-- cursor -->
<svg style="left:591px;top:634px" width="18" height="23" viewBox="0 0 18 23"><path d="M5.2 1.2c1 0 1.8.8 1.8 1.8v7.5l.5-.2c.3-1 1.1-1.5 2-1.4.8.1 1.3.6 1.5 1.3.5-.5 1.2-.7 1.9-.5.7.2 1.1.8 1.2 1.4.4-.3 1-.4 1.5-.2.8.3 1.2 1 1.2 1.8v4.5c0 3.2-2.4 5.6-5.6 5.6H9.3c-2 0-3.4-1-4.4-2.6L1.3 14.3c-.5-.8-.3-1.8.5-2.3.8-.5 1.7-.3 2.2.3l-.6 0V3c0-1 .8-1.8 1.8-1.8z" fill="#fff" stroke="#3a3f58" stroke-width="1.3"/><path d="M8 10.5v4M10.6 11v3.5M13 11.5v3" stroke="#3a3f58" stroke-width="1"/></svg>
</body></html>
